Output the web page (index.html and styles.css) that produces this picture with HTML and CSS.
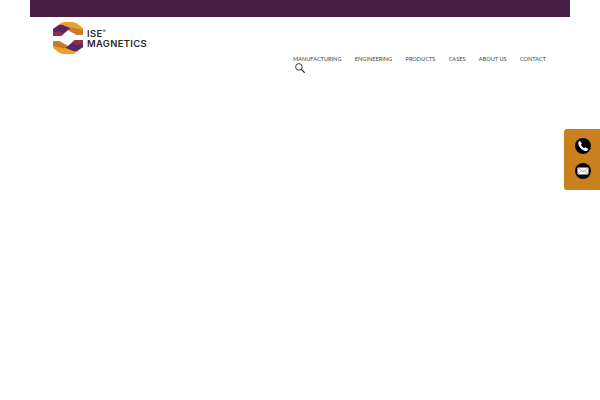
FILE: index.html
```html
<!DOCTYPE html>
<html lang="en">
<head>
    <meta charset="UTF-8">
    <meta name="viewport" content="width=device-width, initial-scale=1.0">
    <title>ISE Magnetics</title>
    <link rel="stylesheet" href="styles.css">
</head>
<body>
    <div class="wrapper">
        <div class="top-bar"></div>
        <header class="header">
            <a class="logo" href="#">
                <svg class="logo-mark" width="30" height="32" viewBox="0 0 30 32">
                    <g id="half">
                        <path d="M0 7 L7 1.5 Q9 0 12 0 L19 0 Q22 0 24 1.5 L30 6 L30 13 L24 13 L15 8 L8 14 L0 14 Z" fill="#e9a02c"/>
                        <path d="M0 7 L6 3 Q9 2 12 4 L18 6.2 L15 8 L8 14 L0 14 Z" fill="#5c2468"/>
                        <path d="M0 10 L6 9 L11 11.5 L8 14 L0 14 Z" fill="#8a3148"/>
                        <path d="M24 13 L15 8 L19 5.5 L30 8 L30 13 Z" fill="#c87b27"/>
                    </g>
                    <use href="#half" transform="rotate(180 15 16)"/>
                </svg>
                <span class="logo-text">
                    <span class="logo-line">ISE<sup class="logo-reg">®</sup></span>
                    <span class="logo-line">MAGNETICS</span>
                </span>
            </a>
            <nav class="nav">
                <div class="nav-links">
                    <a href="#">MANUFACTURING</a>
                    <a href="#">ENGINEERING</a>
                    <a href="#">PRODUCTS</a>
                    <a href="#">CASES</a>
                    <a href="#">ABOUT US</a>
                    <a href="#">CONTACT</a>
                </div>
                <button class="search-btn" type="button" aria-label="Search">
                    <svg width="10" height="10" viewBox="0 0 10 10" fill="none" stroke="#222" stroke-width="0.9">
                        <circle cx="3.9" cy="3.9" r="3.3"/>
                        <path d="M6.3 6.3 L9.7 9.7" stroke-width="1.2"/>
                    </svg>
                </button>
            </nav>
        </header>
    </div>

    <div class="contact-tab">
        <a class="contact-icon" href="#" aria-label="Phone">
            <svg width="16" height="16" viewBox="0 0 16 16">
                <circle cx="8" cy="8" r="8" fill="#000"/>
                <path d="M5 3 L6.8 5.6 L6 6.8 C6.5 8 7.8 9.5 9.2 10.1 L10.4 9.3 L13.1 11 C12.8 12.3 11.7 13.2 10.6 13 C7.2 12.4 3.6 8.6 3.2 5.4 C3.1 4.3 3.9 3.2 5 3 Z" fill="#fff"/>
            </svg>
        </a>
        <a class="contact-icon" href="#" aria-label="Email">
            <svg width="16" height="16" viewBox="0 0 16 16">
                <circle cx="8" cy="8" r="8" fill="#000"/>
                <rect x="2.5" y="4.5" width="11" height="7" rx="0.8" fill="#fff"/>
                <path d="M2.9 4.9 L8 8.8 L13.1 4.9 M2.9 11.2 L6.4 7.8 M13.1 11.2 L9.6 7.8" fill="none" stroke="#777" stroke-width="0.6"/>
            </svg>
        </a>
    </div>
</body>
</html>
```

FILE: styles.css
```css
body {
    font-family: "Liberation Sans", Arial, sans-serif;
    background-color: #fff;
    margin: 0;
}
a {
    text-decoration: none;
}
.wrapper {
    width: 540px;
    margin: 0 auto;
}
.top-bar {
    height: 17px;
    background-color: #4a1f46;
}
.header {
    display: flex;
    justify-content: space-between;
    padding: 5px 24px 0 23px;
}
.logo {
    display: flex;
    align-items: center;
    gap: 4px;
    height: 32px;
    color: #2a2a2a;
}
.logo-mark {
    display: block;
}
.logo-text {
    display: flex;
    flex-direction: column;
    padding-top: 1px;
}
.logo-line {
    font-family: Inter, "Liberation Sans", sans-serif;
    font-size: 9.4px;
    font-weight: 600;
    line-height: 9.5px;
    letter-spacing: 0.35px;
}
.logo-reg {
    font-size: 5px;
    line-height: 0;
    vertical-align: 4px;
    font-weight: 400;
}
.nav {
    display: flex;
    flex-direction: column;
    align-items: flex-start;
    width: 253px;
    padding-top: 32px;
}
.nav-links {
    display: flex;
    justify-content: space-between;
    width: 100%;
}
.nav a {
    font-family: Lato, "Liberation Sans", sans-serif;
    font-size: 5.6px;
    line-height: 9px;
    color: #444;
    white-space: nowrap;
}
.search-btn {
    display: block;
    width: 10px;
    height: 10px;
    padding: 0;
    margin: 0 0 0 2px;
    border: none;
    background: none;
    cursor: pointer;
}
.search-btn svg {
    display: block;
}
.contact-tab {
    position: fixed;
    top: 129px;
    right: 0;
    width: 36px;
    height: 61px;
    box-sizing: border-box;
    padding: 9px 9px 0 11px;
    display: flex;
    flex-direction: column;
    gap: 9px;
    background-color: #c8811c;
    border-radius: 3px 0 0 3px;
}
.contact-icon {
    display: block;
    width: 16px;
    height: 16px;
}
.contact-icon svg {
    display: block;
}
```
